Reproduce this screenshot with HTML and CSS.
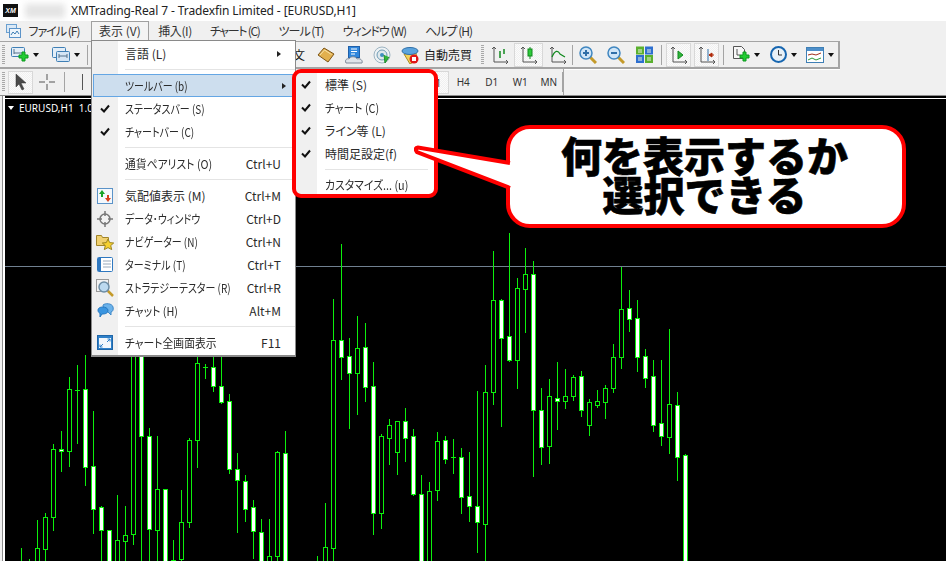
FILE: index.html
```html
<!DOCTYPE html>
<html lang="ja">
  <head>
    <meta charset="UTF-8" />
    <title>XMTrading-Real 7 - Tradexfin Limited - [EURUSD,H1]</title>
    <link rel="stylesheet" href="styles.css">
  </head>
  <body>
    <div class="window">
      <div class="titlebar">
        <div class="logo">XM</div>
        <div class="blurred"></div>
        <div class="title">XMTrading-Real 7 - Tradexfin Limited - [EURUSD,H1]</div>
      </div>

      <div class="menubar">
        <svg class="app-icon" width="16" height="16" viewBox="0 0 16 16"><rect x="1.5" y="1.5" width="10" height="8" fill="#dbe9f6" stroke="#6ba0d0"/><rect x="4.5" y="5.5" width="11" height="9" fill="#eef5fb" stroke="#5b93c8"/><path d="M6 12l2-3 2 2 2-3 2 3" fill="none" stroke="#3f7fb5"/></svg>
        <span class="menu-item kana">ファイル (F)</span>
        <span class="menu-item open">表示 (V)</span>
        <span class="menu-item kanji">挿入(I)</span>
        <span class="menu-item kana tight">チャート (C)</span>
        <span class="menu-item kana">ツール (T)</span>
        <span class="menu-item kana">ウィンドウ (W)</span>
        <span class="menu-item kana">ヘルプ (H)</span>
      </div>

      <div class="toolbar toolbar-main">
        <i class="grip"></i>
        <span class="tool first">
          <svg width="18" height="18" viewBox="0 0 18 18"><rect x="0.5" y="1.5" width="13" height="9" rx="1" fill="#e3eef8" stroke="#3f7fb5"/><path d="M3 3v5M3 7h8" stroke="#55708a" fill="none"/><path d="M8 9h3V6h3v3h3v3h-3v3h-3v-3H8z" fill="#22cc33" stroke="#0d9a1e"/></svg>
        </span>
        <i class="drop"></i>
        <span class="tool second">
          <svg width="18" height="18" viewBox="0 0 18 18"><rect x="0.5" y="1.5" width="13" height="10" rx="1" fill="#e3eef8" stroke="#3f7fb5"/><rect x="4.5" y="5.5" width="13" height="10" rx="1" fill="#d4e5f5" stroke="#3f7fb5"/><path d="M7 10h8M7 8v4M15 8v4" stroke="#55708a" fill="none"/></svg>
        </span>
        <i class="drop"></i>
        <i class="sep sep-first"></i>

        <span class="order-label">新規注文</span>
        <span class="tool">
          <svg width="18" height="18" viewBox="0 0 18 18"><path d="M1 9l6-7 10 6-6 8z" fill="#e2b04e" stroke="#7c5518"/><path d="M3 9l4.500-5 7 4.500" fill="none" stroke="#f7e2a8"/></svg>
        </span>
        <span class="tool">
          <svg width="18" height="18" viewBox="0 0 18 18"><rect x="3.5" y="0.5" width="11" height="11" fill="#2f86dc" stroke="#1f5fa8"/><path d="M6 3h6M6 5.500h6M6 8h4" stroke="#fff"/><path d="M1 17c-1.500-3 1-5 3-4 1-3 7-3 8 0 3-1 6 1 5 4z" fill="#dfe4ea" stroke="#7e8a99"/></svg>
        </span>
        <span class="tool">
          <svg width="18" height="18" viewBox="0 0 18 18"><circle cx="9" cy="9" r="8" fill="#eef2f4" stroke="#9db4c2"/><circle cx="9" cy="9" r="5" fill="#dfe8ec" stroke="#6d9bb5"/><circle cx="9" cy="9" r="2" fill="#3f8fc0"/><path d="M11 9l1 8 4-6" fill="#2fb53a" stroke="#1f8f2a"/></svg>
        </span>
        <span class="tool">
          <svg width="20" height="18" viewBox="0 0 20 18"><path d="M4 8l12-1 1 7-7 4z" fill="#f2d25c" stroke="#a98a22"/><ellipse cx="10" cy="5" rx="8" ry="3.500" fill="#5ba4de" stroke="#2f6fa8"/><circle cx="14" cy="13" r="4.500" fill="#e01818"/><rect x="12" y="11" width="4" height="4" fill="#fff"/></svg>
        </span>
        <span class="auto-label">自動売買</span>
        <i class="grip grip-mid"></i>
        <span class="tool wide">
          <svg width="18" height="18" viewBox="0 0 18 18"><path d="M3 1v15h14M1 3l2-2 2 2M15 14l2 2-2 2" fill="none" stroke="#555"/><path d="M9 5v7M13 3v5" stroke="#11891e" stroke-width="1.500"/></svg>
        </span>
        <span class="tool wide pressed">
          <svg width="18" height="18" viewBox="0 0 18 18"><path d="M3 1v15h14M1 3l2-2 2 2M15 14l2 2-2 2" fill="none" stroke="#555"/><path d="M10 1v12" stroke="#11891e"/><rect x="8" y="3" width="4" height="7" fill="#2ecb3a" stroke="#11891e"/></svg>
        </span>
        <span class="tool wide">
          <svg width="18" height="18" viewBox="0 0 18 18"><path d="M3 1v15h14M1 3l2-2 2 2M15 14l2 2-2 2" fill="none" stroke="#555"/><path d="M3 11c3-7 6-7 8-3l5 3" fill="none" stroke="#11891e" stroke-width="1.200"/></svg>
        </span>
        <i class="sep"></i>
        <span class="tool zoom-first">
          <svg width="18" height="18" viewBox="0 0 18 18"><path d="M11 11l6 6" stroke="#c49a2a" stroke-width="3"/><circle cx="7" cy="7" r="6" fill="#cfe5f7" stroke="#3f86c0" stroke-width="1.500"/><path d="M4 7h6M7 4v6" stroke="#2f6fa8" stroke-width="2"/></svg>
        </span>
        <span class="tool">
          <svg width="18" height="18" viewBox="0 0 18 18"><path d="M11 11l6 6" stroke="#c49a2a" stroke-width="3"/><circle cx="7" cy="7" r="6" fill="#cfe5f7" stroke="#3f86c0" stroke-width="1.500"/><path d="M4 7h6" stroke="#2f6fa8" stroke-width="2"/></svg>
        </span>
        <span class="tool">
          <svg width="17" height="17" viewBox="0 0 17 17"><rect x="0" y="0.500" width="8" height="8" fill="#5ab02e"/><rect x="9" y="0.500" width="8" height="8" fill="#2d6fd0"/><rect x="0" y="9" width="8" height="8" fill="#2d6fd0"/><rect x="9" y="9" width="8" height="8" fill="#5ab02e"/><path d="M2 4h4M2 6h4M11 4h4M11 6h4M2 12h4M2 14h4M11 12h4M11 14h4" stroke="#e8f2e0"/></svg>
        </span>
        <i class="sep sep-zoom"></i>
        <span class="tool box first-box pressed">
          <svg width="18" height="18" viewBox="0 0 18 18"><path d="M3 1v15h14M1 3l2-2 2 2M15 14l2 2-2 2" fill="none" stroke="#555"/><path d="M8 5l5 4-5 4z" fill="#2fb53a" stroke="#11891e"/></svg>
        </span>
        <span class="tool box pressed">
          <svg width="18" height="18" viewBox="0 0 18 18"><path d="M3 1v15h14M1 3l2-2 2 2M15 14l2 2-2 2" fill="none" stroke="#555"/><path d="M10 3v12" stroke="#2f6fa8"/><path d="M11 9h5M14 7l-3 2 3 2z" stroke="#b02a0a" fill="#b02a0a"/></svg>
        </span>
        <i class="sep sep-box"></i>
        <span class="tool narrow icon-add">
          <svg width="18" height="19" viewBox="0 0 18 19"><path d="M1.500 1.500h8l3 3v9h-11z" fill="#f7f7f7" stroke="#555"/><path d="M5 4v6h3" fill="none" stroke="#555"/><path d="M8 10h3V7h3v3h3v3h-3v3h-3v-3H8z" fill="#22cc33" stroke="#0d9a1e"/></svg>
        </span>
        <i class="drop"></i>
        <span class="tool narrow">
          <svg width="17" height="17" viewBox="0 0 17 17"><circle cx="8.500" cy="8.500" r="7.500" fill="#e8f1f8" stroke="#1766b0" stroke-width="2"/><path d="M8.500 4v5h3.500" fill="none" stroke="#333"/></svg>
        </span>
        <i class="drop"></i>
        <span class="tool narrow">
          <svg width="18" height="16" viewBox="0 0 18 16"><rect x="0.500" y="0.500" width="17" height="15" fill="#fff" stroke="#3f7fb5"/><rect x="1" y="1" width="16" height="3" fill="#4d8fca"/><path d="M2 8l4-1 4 1 5-2" fill="none" stroke="#a0301a"/><path d="M2 13l4-2 4 2 5-2" fill="none" stroke="#2a9a35"/></svg>
        </span>
        <i class="drop"></i>
      </div>

      <div class="toolbar toolbar-second">
        <i class="grip"></i>
        <span class="tool box cursor pressed">
          <svg width="14" height="18" viewBox="0 0 14 18"><path d="M2 1v13l3-3 3 6 2-1-3-6h5z" fill="#4a4a4a" stroke="#333" stroke-width="0.500"/></svg>
        </span>
        <span class="tool">
          <svg width="16" height="16" viewBox="0 0 16 16"><path d="M8 0v6M8 10v6M0 8h6M10 8h6" stroke="#555" fill="none"/></svg>
        </span>
        <i class="sep sep-cross"></i>
        <i class="vline"></i>
        <span class="frames">
          <span class="frame pressed">H1</span>
          <span class="frame">H4</span>
          <span class="frame">D1</span>
          <span class="frame">W1</span>
          <span class="frame">MN</span>
        </span>
        <i class="sep"></i>
      </div>

      <div class="chart-frame">
        <div class="chart">
          <svg id="candles" class="candles" width="941" height="462" viewBox="5 99 941 462"></svg>
          <div class="chart-label"><i class="down"></i>EURUSD,H1&nbsp; 1.08</div>
        </div>
      </div>
    </div>

    <!-- menus lie over the toolbars and chart -->
    <ul class="menu">
      <li class="row"><span class="ico"></span><span class="label">言語 (L)</span><i class="arrow"></i></li>
      <li class="line line-first"></li>
      <li class="row active"><span class="ico"></span><span class="label cond">ツールバー (b)</span><i class="arrow"></i></li>
      <li class="row"><span class="ico"><svg class="check" width="10" height="9" viewBox="0 0 10 9"><path d="M1 4.500l3 3 5-6" fill="none" stroke="#111" stroke-width="2"/></svg></span><span class="label cond">ステータスバー (S)</span></li>
      <li class="row"><span class="ico"><svg class="check" width="10" height="9" viewBox="0 0 10 9"><path d="M1 4.500l3 3 5-6" fill="none" stroke="#111" stroke-width="2"/></svg></span><span class="label cond">チャートバー (C)</span></li>
      <li class="line"></li>
      <li class="row"><span class="ico"></span><span class="label cond-mid">通貨ペアリスト (O)</span><span class="key">Ctrl+U</span></li>
      <li class="line"></li>
      <li class="row"><span class="ico"><svg width="16" height="16" viewBox="0 0 16 16"><rect x="0.500" y="0.500" width="15" height="15" fill="#f4f8fc" stroke="#5b93c8"/><path d="M5 2l3 4H6v3H4V6H2z" fill="#19a32a"/><path d="M11 14l-3-4h2V7h2v3h2z" fill="#d8401c"/></svg></span><span class="label">気配値表示 (M)</span><span class="key">Ctrl+M</span></li>
      <li class="row"><span class="ico"><svg width="16" height="16" viewBox="0 0 16 16"><circle cx="8" cy="8" r="5" fill="#f2f2f2" stroke="#777" stroke-width="1.500"/><path d="M8 0v5M8 11v5M0 8h5M11 8h5" stroke="#777" stroke-width="1.500"/></svg></span><span class="label cond">データ･ウィンドウ</span><span class="key">Ctrl+D</span></li>
      <li class="row"><span class="ico"><svg width="18" height="17" viewBox="0 0 18 17"><path d="M0.500 2.500h5l1 2h6v8h-12z" fill="#f0d070" stroke="#a08428"/><path d="M12 6l1.700 3.600 4 .4-3 2.600 1 4-3.700-2-3.700 2 1-4-3-2.600 4-.4z" fill="#f5d030" stroke="#9c8420"/></svg></span><span class="label cond">ナビゲーター (N)</span><span class="key">Ctrl+N</span></li>
      <li class="row"><span class="ico"><svg width="16" height="15" viewBox="0 0 16 15"><rect x="0.500" y="0.500" width="15" height="14" rx="1" fill="#fff" stroke="#2f78c0"/><rect x="1" y="1" width="3" height="13" fill="#2f78c0"/><path d="M6 4h8M6 7h8M6 10h8" stroke="#9ab"/></svg></span><span class="label cond">ターミナル (T)</span><span class="key">Ctrl+T</span></li>
      <li class="row"><span class="ico"><svg width="18" height="18" viewBox="0 0 18 18"><rect x="0.500" y="0.500" width="12" height="12" fill="#f3f3f3" stroke="#999"/><path d="M12 12l5 5" stroke="#c49a2a" stroke-width="2.500"/><circle cx="8" cy="8" r="5" fill="#bcd9ef" stroke="#6d8da5" stroke-width="1.500"/></svg></span><span class="label cond">ストラテジーテスター (R)</span><span class="key">Ctrl+R</span></li>
      <li class="row"><span class="ico"><svg width="17" height="16" viewBox="0 0 17 16"><path d="M6 2c2-2 9-2 10 2 1 3-1 5-2 5v3l-3-3H7z" fill="#6bb2ea" stroke="#3f88c8"/><path d="M1 7c0-4 9-4 10 0 0 4-4 4-6 4l-2 3v-4C2 10 1 9 1 7z" fill="#3a95e0" stroke="#2578c0"/></svg></span><span class="label cond-mid">チャット (H)</span><span class="key">Alt+M</span></li>
      <li class="line"></li>
      <li class="row"><span class="ico"><svg width="16" height="15" viewBox="0 0 16 15"><rect x="0.500" y="0.500" width="15" height="14" fill="#2f80c8" stroke="#1f66a8"/><rect x="2" y="3" width="12" height="10" fill="#f2f7fc"/><path d="M3 12l3-3M3 9.500V12h2.500M13 4l-3 3M13 6.500V4h-2.500" fill="none" stroke="#2f80c8"/></svg></span><span class="label cond-mid">チャート全画面表示</span><span class="key">F11</span></li>
    </ul>

    <ul class="menu submenu">
      <li class="row"><span class="ico"><svg class="check" width="10" height="9" viewBox="0 0 10 9"><path d="M1 4.500l3 3 5-6" fill="none" stroke="#111" stroke-width="2"/></svg></span><span class="label">標準 (S)</span></li>
      <li class="row"><span class="ico"><svg class="check" width="10" height="9" viewBox="0 0 10 9"><path d="M1 4.500l3 3 5-6" fill="none" stroke="#111" stroke-width="2"/></svg></span><span class="label cond-mid">チャート (C)</span></li>
      <li class="row"><span class="ico"><svg class="check" width="10" height="9" viewBox="0 0 10 9"><path d="M1 4.500l3 3 5-6" fill="none" stroke="#111" stroke-width="2"/></svg></span><span class="label">ライン等 (L)</span></li>
      <li class="row"><span class="ico"><svg class="check" width="10" height="9" viewBox="0 0 10 9"><path d="M1 4.500l3 3 5-6" fill="none" stroke="#111" stroke-width="2"/></svg></span><span class="label">時間足設定(f)</span></li>
      <li class="line"></li>
      <li class="row"><span class="ico"></span><span class="label cond-mid">カスタマイズ... (u)</span></li>
    </ul>

    <svg class="tail" width="100" height="50" viewBox="0 0 100 50"><path d="M96 19L4 3.500Q0 4 3 8L96 44" fill="#fff" stroke="#f00" stroke-width="4"/></svg>
    <div class="callout">
      <span class="callout-line">何を表示するか</span>
      <span class="callout-line">選択できる</span>
    </div>

    <script src="chart.js"></script>
  </body>
</html>
```

FILE: styles.css
```css
* {
  margin: 0;
  padding: 0;
  box-sizing: border-box;
}

body {
  width: 946px;
  height: 561px;
  overflow: hidden;
  position: relative;
  background: #f0f0f0;
  color: #1a1a1a;
  font-family: "Noto Sans CJK JP", "Noto Sans", sans-serif;
  font-size: 12px;
  font-feature-settings: "palt";
}

.window {
  display: flex;
  flex-direction: column;
  height: 561px;
}

/* title */
.titlebar {
  display: flex;
  align-items: center;
  height: 21px;
  background: #fff;
}

.logo {
  width: 15px;
  height: 13px;
  margin-left: 3px;
  background: #111;
  color: #fff;
  font: italic bold 7px/13px "Liberation Sans", sans-serif;
  text-align: center;
}

.blurred {
  width: 40px;
  height: 14px;
  margin-left: 7px;
  background: #e4e4e4;
  filter: blur(3px);
}

.title {
  margin-left: 6px;
  font-family: "Noto Sans", sans-serif;
  font-size: 12px;
  letter-spacing: -0.1px;
  color: #222;
}

/* menu bar */
.menubar {
  display: flex;
  align-items: center;
  height: 20px;
  padding-left: 5px;
}

.app-icon {
  margin-right: -2px;
}

.menu-item {
  padding: 0 9.5px;
  height: 20px;
  line-height: 20px;
  color: #333;
  white-space: nowrap;
}

.menu-item.kana {
  letter-spacing: -1px;
}

.menu-item.tight {
  letter-spacing: -1.3px;
}

.menu-item.kanji {
  padding: 0 8.5px;
  letter-spacing: -0.4px;
}

.menu-item.open {
  margin: 0 1px 0 2px;
  background: #f4f4f4;
  border: 1px solid #a0a0a0;
  border-bottom: none;
  line-height: 18px;
  padding: 0 7px;
}

/* toolbars */
.toolbar {
  display: flex;
  align-items: center;
  background: #f0f0f0;
}

.toolbar-main {
  width: 840px;
  height: 28px;
  border-top: 1px solid #a4a4a4;
  border-bottom: 2px solid #a4a4a4;
  border-right: 2px solid #a4a4a4;
  box-shadow: 0 1px 0 #fff;
}

.toolbar-second {
  width: 564px;
  height: 26px;
  border-right: 1px solid #a4a4a4;
}

.grip {
  width: 3px;
  height: 20px;
  margin-left: 2px;
  background: repeating-linear-gradient(to bottom, #a8a8a8 0 1px, #f0f0f0 1px 2px);
}

.grip-mid {
  margin-left: 9px;
  margin-right: 1px;
}

.tool {
  display: flex;
  align-items: center;
  justify-content: center;
  flex: none;
  width: 28px;
  height: 24px;
}

.tool.first {
  width: 18px;
  margin-left: 6px;
}

.tool.second {
  width: 18px;
  margin-left: 9px;
}

.tool.wide {
  width: 29px;
}

.tool.zoom-first {
  margin-left: 1px;
}

.tool.box {
  width: 25px;
}

.tool.narrow {
  width: 18px;
  margin-left: 5px;
}

.tool.icon-add {
  margin-left: 8px;
}

.first-box {
  margin-right: 3px;
}

.pressed {
  background: #f8f8f8;
  background-image: repeating-conic-gradient(#f0f0f0 0 25%, #fbfbfb 0 50%);
  background-size: 2px 2px;
  border: 1px solid #fff;
  outline: 1px solid #d8d8d8;
  outline-offset: -1px;
}

.drop {
  flex: none;
  width: 0;
  height: 0;
  margin-left: 4px;
  margin-right: 4px;
  border-left: 3.5px solid transparent;
  border-right: 3.5px solid transparent;
  border-top: 4px solid #111;
}

.sep {
  flex: none;
  width: 1px;
  height: 20px;
  background: #a4a4a4;
}

.sep-first {
  margin-left: 3px;
}

.sep-zoom {
  margin-left: 3px;
  margin-right: 4px;
}

.sep-box {
  margin-left: 4px;
}

.sep-cross {
  margin-left: 3px;
}

.order-label {
  margin-left: auto;
  flex: none;
  width: 60px;
  text-align: right;
  padding-right: 7px;
  white-space: nowrap;
}

.auto-label {
  flex: none;
  width: 48px;
  white-space: nowrap;
}

.cursor {
  margin-left: 3px;
  height: 23px;
}

.vline {
  width: 1px;
  height: 16px;
  margin-left: 17px;
  background: #555;
}

.frames {
  display: flex;
  margin-left: auto;
  margin-right: -1px;
  color: #333;
  font-size: 10px;
  font-family: "Noto Sans", sans-serif;
}

.frame {
  width: 28.500px;
  height: 23px;
  line-height: 23px;
  text-align: center;
}

/* chart */
.chart-frame {
  flex: 1;
  min-height: 0;
  border-top: 1px solid #8c8c8c;
  padding-left: 2px;
}

.chart {
  position: relative;
  height: 100%;
  background: #000;
  border-left: 1px solid #8c8c8c;
  overflow: hidden;
}

.chart::before {
  content: "";
  position: absolute;
  left: 0;
  top: 0;
  bottom: 0;
  width: 2px;
  background: #fff;
}

.chart::after {
  content: "";
  position: absolute;
  left: 0;
  right: 0;
  top: 2px;
  height: 1px;
  background: #fff;
}

.candles {
  position: absolute;
  left: 2px;
  top: 3px;
  display: block;
  shape-rendering: crispEdges;
}

.chart-label {
  position: absolute;
  left: 5px;
  top: 5px;
  display: flex;
  align-items: center;
  color: #fff;
  font-family: "Noto Sans", sans-serif;
  font-size: 10px;
  line-height: 14px;
}

.down {
  width: 0;
  height: 0;
  margin-right: 5px;
  border-left: 3.500px solid transparent;
  border-right: 3.500px solid transparent;
  border-top: 4px solid #fff;
}

/* dropdown menu */
.menu {
  position: absolute;
  left: 91px;
  top: 40px;
  width: 205px;
  height: 317px;
  list-style: none;
  padding: 1px 0 0;
  background: linear-gradient(to right, #f0f0f0 26px, #fff 26px);
  border: 1px solid #8a8a8a;
  border-bottom-width: 2px;
  color: #2a2a2a;
}

.row {
  display: flex;
  align-items: center;
  height: 23px;
  padding-right: 14px;
}

.row.active {
  margin: 0 0 0 1px;
  background: #cddeee;
  box-shadow: inset 0 0 0 1px #64a6e4;
  padding-right: 9px;
}

.ico {
  display: flex;
  justify-content: center;
  align-items: center;
  flex: none;
  width: 33px;
  padding-right: 7px;
}

.row.active .ico {
  width: 32px;
}

.label {
  flex: 1;
  min-width: 0;
  white-space: nowrap;
  transform-origin: left center;
}

/* the original UI font has narrow kana */
.cond {
  transform: scaleX(0.83);
}

.cond-mid {
  transform: scaleX(0.9);
}

.key {
  color: #2a2a2a;
}

.arrow {
  width: 0;
  height: 0;
  border-left: 4px solid #222;
  border-top: 3px solid transparent;
  border-bottom: 3px solid transparent;
}

.line {
  height: 9px;
  margin-left: 33px;
  background: linear-gradient(#e4e4e4, #e4e4e4) center / 100% 1px no-repeat;
}

/* red highlight around the submenu */
.submenu {
  left: 292px;
  top: 69px;
  width: 146px;
  height: 129px;
  padding-top: 0;
  border: 4px solid #f00;
  border-radius: 9px;
  background: linear-gradient(to right, #f0f0f0 21px, #fff 21px);
}

.submenu .ico {
  width: 29px;
  padding-right: 9px;
}

.submenu .line {
  height: 8px;
  margin-left: 29px;
  margin-right: 6px;
}

/* speech bubble */
.callout {
  position: absolute;
  left: 506px;
  top: 125px;
  width: 400px;
  height: 103px;
  padding: 6px 3px 0 0;
  border: 4px solid #f00;
  border-radius: 24px;
  background: #fff;
  color: #000;
  font-size: 41px;
  font-weight: 900;
  text-align: center;
  font-feature-settings: normal;
  -webkit-text-stroke: 0.6px #000;
}

.callout-line {
  display: block;
  height: 39px;
  line-height: 39px;
  white-space: nowrap;
}

.tail {
  position: absolute;
  left: 414px;
  top: 144px;
  z-index: 1;
}
```

FILE: chart.js
```js
// x, high, body top, body bottom, low, kind (0 hollow, 1 white, 2 doji)
// y values read off in 3x crops, so each list has its own origin
const LOWER = [
  [21, 624, 800, 800, 800, 0], [29, 657, 800, 800, 800, 0],
  [37, 540, 625, 800, 800, 0], [45, 519, 532, 626, 800, 0],
  [53, 312, 328, 532, 573, 0], [61, 273, 328, 334, 396, 1],
  [69, 111, 148, 334, 381, 0], [77, 75, 149, 151, 312, 2],
  [85, 45, 148, 380, 438, 1], [93, 213, 379, 508, 582, 1],
  [101, 498, 502, 571, 800, 1], [109, 571, 571, 800, 800, 1],
  [117, 465, 601, 800, 800, 0], [125, 498, 586, 602, 800, 0],
  [133, 0, 0, 583, 615, 0], [141, 0, 0, 289, 800, 1],
  [149, 264, 289, 566, 800, 1], [157, 288, 448, 569, 800, 0],
  [165, 448, 448, 800, 800, 1], [173, 600, 661, 800, 800, 1],
  [181, 450, 547, 656, 800, 0], [189, 294, 301, 547, 564, 0],
  [197, 0, 70, 301, 384, 0], [205, 72, 82, 82, 117, 2],
  [213, 0, 82, 139, 156, 1], [221, 0, 139, 185, 192, 1],
  [229, 162, 184, 388, 402, 1], [237, 339, 388, 421, 579, 1],
  [245, 405, 424, 508, 546, 1], [253, 480, 502, 574, 657, 1],
  [261, 537, 577, 800, 800, 1], [269, 537, 649, 800, 800, 0],
  [277, 333, 337, 649, 800, 0], [285, 273, 340, 800, 800, 1],
];

const UPPER = [
  [317, 978, 1100, 1100, 1100, 0], [325, 820, 952, 1100, 1100, 0],
  [333, 207, 331, 953, 1100, 0], [341, 42, 331, 380, 450, 1],
  [349, 324, 379, 428, 597, 1], [357, 258, 355, 428, 555, 0],
  [365, 279, 352, 470, 516, 1], [373, 396, 469, 848, 915, 1],
  [381, 612, 619, 848, 897, 0], [389, 567, 586, 623, 705, 0],
  [397, 574, 574, 665, 735, 0], [405, 534, 574, 623, 696, 1],
  [413, 598, 619, 791, 798, 1], [421, 735, 793, 1100, 1100, 1],
  [429, 756, 784, 1100, 1100, 0], [437, 606, 634, 779, 813, 0],
  [445, 618, 631, 686, 702, 1], [453, 627, 682, 682, 732, 2],
  [461, 655, 682, 800, 852, 1], [469, 666, 799, 827, 876, 1],
  [477, 483, 829, 875, 969, 1], [485, 405, 487, 881, 1100, 0],
  [493, 63, 211, 485, 525, 0], [501, 207, 211, 323, 591, 1],
  [509, 9, 319, 389, 396, 1], [517, 144, 175, 389, 477, 0],
  [525, 54, 133, 176, 309, 0], [533, 93, 133, 539, 741, 1],
  [541, 474, 541, 650, 705, 1], [549, 447, 499, 647, 702, 0],
  [557, 396, 503, 512, 600, 1], [565, 417, 499, 512, 537, 0],
  [573, 435, 442, 499, 513, 0], [581, 423, 439, 539, 561, 1],
  [589, 507, 517, 584, 618, 0], [597, 480, 514, 524, 534, 0],
  [605, 465, 475, 515, 567, 0], [613, 342, 382, 473, 489, 0],
  [621, 110, 238, 380, 417, 0], [629, 180, 235, 266, 306, 1],
  [637, 210, 265, 380, 426, 1], [645, 357, 379, 443, 474, 1],
  [653, 390, 439, 584, 606, 1], [661, 390, 580, 617, 648, 1],
  [669, 297, 523, 620, 672, 0], [677, 486, 526, 680, 753, 1],
  [685, 672, 676, 1100, 1100, 1],
];

const GREEN = "#0cf00c";

function candle(c, origin) {
  const y = (v) => Math.round(origin + v / 3);
  const [x, hi, top, bottom, lo, kind] = c;
  const px = x + 0.5;
  let out = `<path d="M${px} ${y(hi)}V${y(lo)}" stroke="${GREEN}"/>`;

  if (kind == 2) {
    out += `<path d="M${x - 2} ${y(top) + 0.5}h5" stroke="${GREEN}"/>`;
  } else {
    const fill = kind == 1 ? "#fff" : "#000";
    const h = Math.max(y(bottom) - y(top), 1);
    out += `<rect x="${x - 2 + 0.5}" y="${y(top) + 0.5}" width="4" height="${h}" fill="${fill}" stroke="${GREEN}"/>`;
  }
  return out;
}

let svg = `<path d="M0 266.500H946" stroke="#708090"/>`;
LOWER.forEach((c) => (svg += candle(c, 340)));
UPPER.forEach((c) => (svg += candle(c, 230)));
document.getElementById("candles").innerHTML = svg;
```
